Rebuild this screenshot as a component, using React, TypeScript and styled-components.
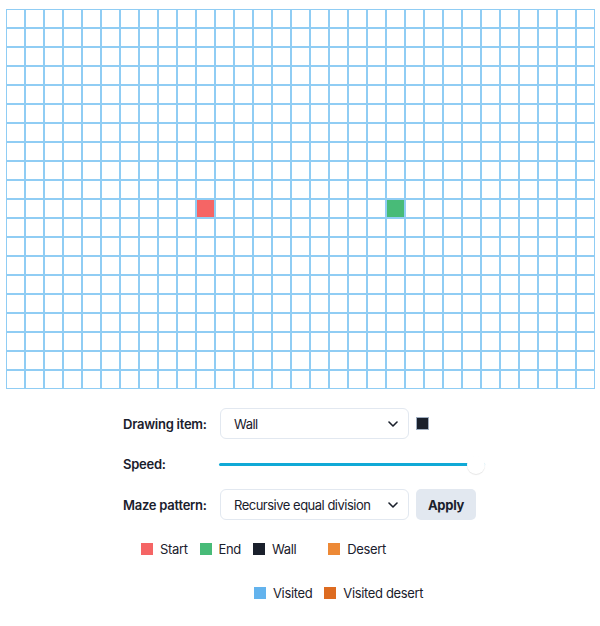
import React, { useState } from 'react'
import styled, { createGlobalStyle } from 'styled-components'

const COLS = 31
const ROWS = 20
const START = { row: 10, col: 10 }
const END = { row: 10, col: 20 }

const colors = {
  line: '#90cdf4',
  start: '#f56565',
  end: '#48bb78',
  wall: '#1a202c',
  desert: '#ed8936',
  visited: '#63b3ed',
  visitedDesert: '#dd6b20',
  text: '#1a202c',
  border: '#e2e8f0',
  track: '#10a9d6',
}

const GlobalStyle = createGlobalStyle`
  html, body {
    margin: 0;
    padding: 0;
    background: #ffffff;
    font-family: Inter, "Liberation Sans", sans-serif;
    color: ${colors.text};
    letter-spacing: -0.35px;
  }
`

const Page = styled.div`
  width: 600px;
  height: 626px;
  padding-top: 9px;
  box-sizing: border-box;
  display: flex;
  flex-direction: column;
  align-items: center;
`

const Board = styled.div`
  display: grid;
  grid-template-columns: repeat(${COLS}, 19px);
  grid-auto-rows: 19px;
`

const Cell = styled.div<{ $fill?: string }>`
  box-sizing: border-box;
  border: 1px solid ${colors.line};
  background: ${({ $fill }) => $fill || '#ffffff'};
`

const Form = styled.div`
  align-self: flex-start;
  margin: 19px 0 0 123px;
  display: grid;
  grid-template-columns: 97px auto;
  row-gap: 10px;
  align-items: center;
`

const Label = styled.label`
  font-size: 13px;
  font-weight: 600;
  letter-spacing: -0.25px;
  white-space: nowrap;
`

const Controls = styled.div`
  display: flex;
  align-items: center;
  gap: 7px;
  min-height: 30px;
`

const SelectBox = styled.button`
  box-sizing: border-box;
  width: 189px;
  height: 31px;
  padding: 0 10px 0 13px;
  display: flex;
  align-items: center;
  justify-content: space-between;
  background: #ffffff;
  border: 1px solid ${colors.border};
  border-radius: 6px;
  font-family: inherit;
  font-size: 13px;
  letter-spacing: -0.5px;
  color: ${colors.text};
  cursor: pointer;
`

const ColorChip = styled.span<{ $color: string }>`
  width: 13px;
  height: 13px;
  box-sizing: border-box;
  background: ${({ $color }) => $color};
  border: 1px solid #a0aec0;
`

const Range = styled.input`
  -webkit-appearance: none;
  appearance: none;
  width: 266px;
  height: 20px;
  margin: 0 0 0 -1px;
  background: transparent;

  &::-webkit-slider-runnable-track {
    height: 3px;
    background: ${colors.track};
    border-radius: 2px;
  }

  &::-webkit-slider-thumb {
    -webkit-appearance: none;
    width: 18px;
    height: 18px;
    margin-top: -7px;
    border-radius: 50%;
    background: #ffffff;
    box-shadow: 0 1px 1px rgba(0, 0, 0, 0.1);
  }
`

const ApplyButton = styled.button`
  box-sizing: border-box;
  width: 60px;
  height: 31px;
  border: none;
  border-radius: 5px;
  background: #e2e8f0;
  font-family: inherit;
  font-size: 13px;
  font-weight: 700;
  letter-spacing: -0.3px;
  color: ${colors.text};
  cursor: pointer;
`

const Legend = styled.div`
  align-self: flex-start;
  margin-top: 21px;
  display: flex;
  flex-direction: column;
  gap: 28px;
`

const LegendRow = styled.div<{ $indent: number }>`
  display: flex;
  align-items: center;
  gap: 12px;
  padding-left: ${({ $indent }) => $indent}px;
`

const LegendItem = styled.div<{ $space?: number }>`
  display: flex;
  align-items: center;
  gap: 7px;
  margin-left: ${({ $space }) => $space || 0}px;
  font-size: 13px;
  line-height: 16px;
`

const Swatch = styled.span<{ $color: string }>`
  width: 12px;
  height: 12px;
  background: ${({ $color }) => $color};
`

const Chevron = () => (
  <svg width="10" height="6" viewBox="0 0 10 6" fill="none">
    <path d="M1 1l4 4 4-4" stroke="#1a202c" strokeWidth="1.6" strokeLinecap="round" strokeLinejoin="round" />
  </svg>
)

const cellFill = (row: number, col: number) => {
  if (row === START.row && col === START.col) return colors.start
  if (row === END.row && col === END.col) return colors.end
  return undefined
}

const App = () => {
  const [speed, setSpeed] = useState(100)

  const cells = []
  for (let r = 0; r < ROWS; r++) {
    for (let c = 0; c < COLS; c++) {
      cells.push(<Cell key={`${r}-${c}`} $fill={cellFill(r, c)} />)
    }
  }

  return (
    <Page>
      <GlobalStyle />
      <Board>{cells}</Board>

      <Form>
        <Label>Drawing item:</Label>
        <Controls>
          <SelectBox>
            <span>Wall</span>
            <Chevron />
          </SelectBox>
          <ColorChip $color={colors.wall} />
        </Controls>

        <Label>Speed:</Label>
        <Controls>
          <Range
            type="range"
            min={0}
            max={100}
            value={speed}
            onChange={(e) => setSpeed(Number(e.target.value))}
          />
        </Controls>

        <Label>Maze pattern:</Label>
        <Controls>
          <SelectBox>
            <span>Recursive equal division</span>
            <Chevron />
          </SelectBox>
          <ApplyButton>Apply</ApplyButton>
        </Controls>
      </Form>

      <Legend>
        <LegendRow $indent={141}>
          <LegendItem><Swatch $color={colors.start} />Start</LegendItem>
          <LegendItem><Swatch $color={colors.end} />End</LegendItem>
          <LegendItem><Swatch $color={colors.wall} />Wall</LegendItem>
          <LegendItem $space={20}><Swatch $color={colors.desert} />Desert</LegendItem>
        </LegendRow>
        <LegendRow $indent={254}>
          <LegendItem><Swatch $color={colors.visited} />Visited</LegendItem>
          <LegendItem><Swatch $color={colors.visitedDesert} />Visited desert</LegendItem>
        </LegendRow>
      </Legend>
    </Page>
  )
}

export default App
